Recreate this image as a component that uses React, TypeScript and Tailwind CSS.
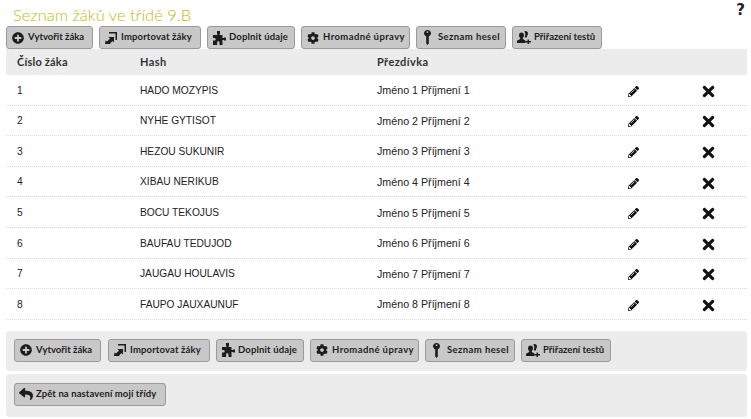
import { FaCog, FaPencilAlt, FaPlusCircle, FaReply, FaTimes } from "react-icons/fa";

function ImportIcon() {
  return (
    <svg viewBox="0 0 12 12" className="w-[12px] h-[12px]" fill="currentColor">
      <path d="M4 0h8v8h-1.500V1.500H4z" />
      <path d="M0 12l.5-3.500L2 9.500 5 6.500 3.500 5H9v5.500L7.500 9 5 11.500l1 .5z" />
    </svg>
  );
}

function PuzzleIcon() {
  return (
    <svg viewBox="0 0 14 14" className="w-[14px] h-[14px]" fill="currentColor">
      <path d="M5 0h3v2.500L7.500 4H10.500v3H12V6.500h2v3h-2V9h-1.500v5H7.500v-2.500a1.200 1.200 0 0 0-2.400 0V14H1V9.500h1.500a1.200 1.200 0 0 0 0-2.400H1V4h4.500L5 2.500z" />
    </svg>
  );
}

function KeyIcon() {
  return (
    <svg viewBox="0 0 7 15" className="w-[7px] h-[15px]" fill="currentColor">
      <path fillRule="evenodd" d="M3.500 0C5.500 0 7 1.300 7 3.200 7 4.600 6 5.800 4.800 6.200V13.500L3.500 15 2.200 13.500V6.200C1 5.800 0 4.600 0 3.200 0 1.300 1.500 0 3.500 0zm0 1.200a.9.9 0 1 0 0 1.800.9.9 0 0 0 0-1.800z" />
    </svg>
  );
}

function UsersIcon() {
  return (
    <svg viewBox="0 0 14 13" className="w-[14px] h-[13px]" fill="currentColor">
      <path d="M4.500 1.500c1.600 0 2.500 1.200 2.500 2.700 0 1.200-.5 2.200-1.200 2.800v1L8.500 9.500V12H0V9.800L3.200 8V7C2.500 6.400 2 5.400 2 4.200 2 2.700 3 1.500 4.500 1.500z" />
      <path d="M8.500 0C10 0 11 1.100 11 2.500c0 1.100-.4 2-1 2.600v.9l-.8.8L7.600 6c.5-.8.7-1.700.7-2.700 0-1.100-.4-2-1.100-2.700C7.600.200 8 0 8.500 0z" />
      <path d="M10.500 8.500h1.500V10h2v1.500h-2V13h-1.500v-1.500h-2V10h2z" />
    </svg>
  );
}

const buttons = [
  { label: "Vytvořit žáka", icon: <FaPlusCircle className="w-[12px] h-[12px]" />, w: "w-[87px]", track: "tracking-normal" },
  { label: "Importovat žáky", icon: <ImportIcon />, w: "w-[102px]", track: "tracking-[0.15px]" },
  { label: "Doplnit údaje", icon: <PuzzleIcon />, w: "w-[88px]", track: "tracking-[0.15px]" },
  { label: "Hromadné úpravy", icon: <FaCog className="w-[12px] h-[12px]" />, w: "w-[109px]", track: "tracking-[0.4px]" },
  { label: "Seznam hesel", icon: <KeyIcon />, w: "w-[90px]", track: "tracking-[0.4px]" },
  { label: "Přiřazení testů", icon: <UsersIcon />, w: "w-[90px]", track: "tracking-normal" },
];

const students = [
  ["1", "HADO MOZYPIS"],
  ["2", "NYHE GYTISOT"],
  ["3", "HEZOU SUKUNIR"],
  ["4", "XIBAU NERIKUB"],
  ["5", "BOCU TEKOJUS"],
  ["6", "BAUFAU TEDUJOD"],
  ["7", "JAUGAU HOULAVIS"],
  ["8", "FAUPO JAUXAUNUF"],
];

function ActionButton({ label, icon, w, track, extra = "" }: { label: string; icon: React.ReactNode; w: string; track: string; extra?: string }) {
  return (
    <button className={`${w} ${extra} h-[23px] flex items-center pl-[3px] rounded-[3px] border border-[#9a9a9a] bg-[#c8c8c8] text-[#1c1c1c] text-[9.5px] font-bold whitespace-nowrap`}>
      <span className="w-[15px] mr-[3px] flex justify-center items-center">{icon}</span>
      <span className={track}>{label}</span>
    </button>
  );
}

function ButtonRow({ wide = false }: { wide?: boolean }) {
  return (
    <div className="flex gap-[6px]">
      {buttons.map((b, i) => (
        <ActionButton key={b.label} {...b} extra={wide && i === 0 ? "mr-[1px]" : ""} />
      ))}
    </div>
  );
}

export default function App() {
  return (
    <div className="w-[751px] h-[419px] overflow-hidden bg-white px-[6px] font-['Lato','Open_Sans',sans-serif]">
      {/* Heading */}
      <div className="h-[26px] flex justify-between items-start">
        <h1 className="pl-[7px] pt-[6px] text-[16.5px] leading-[18px] font-light text-[#c0ba14]">Seznam žáků ve třídě 9.B</h1>
        <span className="pt-[1px] text-[15px] leading-[18px] font-bold text-[#222] font-['DejaVu_Sans',sans-serif]">?</span>
      </div>

      <ButtonRow />

      {/* Table */}
      <div className="w-[741px]">
        <div className="h-[26px] flex items-center bg-[#ececec] text-[11px] font-bold text-[#333]">
          <div className="w-[134px] pl-[11px] tracking-[0.2px]">Číslo žáka</div>
          <div className="w-[237px] tracking-[0.4px]">Hash</div>
          <div className="tracking-[0.4px]">Přezdívka</div>
        </div>
        {students.map(([id, hash]) => (
          <div key={id} className="h-[30.6px] pt-[1px] flex items-center border-b border-dotted border-[#d8d8d8] text-[10.2px] text-[#222] font-['Liberation_Sans',sans-serif]">
            <div className="w-[134px] pl-[11px]">{id}</div>
            <div className="w-[237px]">{hash}</div>
            <div className="w-[251px] text-[10.7px]">{`Jméno ${id} Příjmení ${id}`}</div>
            <div className="w-[11px] text-[#111] pt-[2px]"><FaPencilAlt className="w-[11px] h-[11px]" /></div>
            <div className="ml-[61px] text-[#111] pt-[2px]"><FaTimes className="w-[17px] h-[17px]" /></div>
          </div>
        ))}
      </div>

      {/* Bottom panels */}
      <div className="mt-[11px] w-[741px] h-[40px] pl-[8px] pt-[8px] rounded-[4px] bg-[#ececec]">
        <ButtonRow wide />
      </div>
      <div className="mt-[3px] w-[741px] h-[43px] pl-[8px] pt-[9px] rounded-[4px] bg-[#ececec]">
        <ActionButton label="Zpět na nastavení mojí třídy" icon={<FaReply className="w-[14px] h-[14px]" />} w="w-[152px]" track="tracking-[0.1px]" />
      </div>
    </div>
  );
}
